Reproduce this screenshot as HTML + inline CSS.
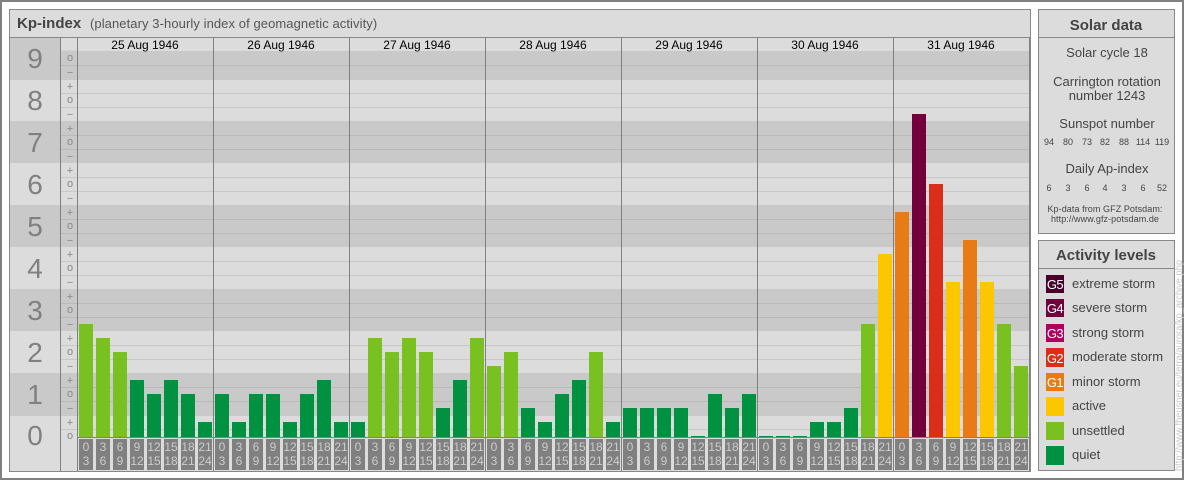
<!DOCTYPE html>
<html><head><meta charset="utf-8"><style>
html,body{margin:0;padding:0;background:#fff}
svg{display:block}
text{font-family:"Liberation Sans",Arial,sans-serif}
.d{font-size:28px;fill:#808080;text-anchor:middle}
.s{font-size:11px;fill:#888;text-anchor:middle}
.h{font-size:12px;fill:#000;text-anchor:middle}
.f{font-size:12px;fill:#ccc;text-anchor:middle}
.t{font-size:13px;fill:#444;text-anchor:middle}
.n{font-size:9px;fill:#444;text-anchor:middle}
.k{font-size:9px;fill:#444;text-anchor:middle;letter-spacing:.08px}
.l{font-size:13px;fill:#444}
.g{font-size:13px;fill:#fff;text-anchor:middle;letter-spacing:-.6px}
.b{font-size:15px;font-weight:bold;fill:#444;text-anchor:middle}
.q{fill:#009240}.u{fill:#79c120}.a{fill:#fdc700}.m{fill:#e77b16}.o{fill:#db2e1a}.v{fill:#72003a}
.c{fill:#808080}
</style></head><body>
<svg width="1184" height="480" viewBox="0 0 1184 480" xmlns="http://www.w3.org/2000/svg">
<rect x="1" y="1" width="1182" height="478" fill="#fff" stroke="#808080" stroke-width="2"/>
<!-- main panel -->
<rect x="9.5" y="9.5" width="1021" height="462" fill="#dcdcdc" stroke="#888"/>
<line x1="10" x2="1030" y1="37.5" y2="37.5" stroke="#888"/>
<text x="17" y="28" font-size="15" font-weight="bold" fill="#444">Kp-index</text>
<text x="90" y="28" font-size="13" fill="#555" letter-spacing=".08">(planetary 3-hourly index of geomagnetic activity)</text>
<!-- bands left -->
<rect x="10" y="38" width="50" height="42" fill="#c9c9c9"/>
<rect x="10" y="121" width="50" height="42" fill="#c9c9c9"/>
<rect x="10" y="205" width="50" height="42" fill="#c9c9c9"/>
<rect x="10" y="289" width="50" height="42" fill="#c9c9c9"/>
<rect x="10" y="373" width="50" height="43" fill="#c9c9c9"/>
<!-- bands chart -->
<rect x="61" y="51" width="969" height="29" fill="#c9c9c9"/>
<rect x="61" y="121" width="969" height="42" fill="#c9c9c9"/>
<rect x="61" y="205" width="969" height="42" fill="#c9c9c9"/>
<rect x="61" y="289" width="969" height="42" fill="#c9c9c9"/>
<rect x="61" y="373" width="969" height="43" fill="#c9c9c9"/>
<!-- grid lines -->
<g stroke="#b9b9b9">
<path d="M61 65.500H1030M61 149.500H1030M61 135.500H1030M61 233.500H1030M61 219.500H1030M61 317.500H1030M61 303.500H1030M61 401.500H1030M61 387.500H1030"/>
</g>
<g stroke="#c8c8c8">
<path d="M61 93.500H1030M61 107.500H1030M61 177.500H1030M61 191.500H1030M61 261.500H1030M61 275.500H1030M61 345.500H1030M61 359.500H1030M61 429.500H1030"/>
</g>
<!-- digits -->
<text class="d" x="35" y="68">9</text>
<text class="d" x="35" y="110">8</text>
<text class="d" x="35" y="152">7</text>
<text class="d" x="35" y="194">6</text>
<text class="d" x="35" y="236">5</text>
<text class="d" x="35" y="278">4</text>
<text class="d" x="35" y="320">3</text>
<text class="d" x="35" y="362">2</text>
<text class="d" x="35" y="404">1</text>
<text class="d" x="35" y="445">0</text>
<!-- signs -->
<text class="s" x="70" y="61">o</text><text class="s" x="70" y="76">−</text>
<text class="s" x="70" y="90">+</text><text class="s" x="70" y="103">o</text><text class="s" x="70" y="118">−</text>
<text class="s" x="70" y="132">+</text><text class="s" x="70" y="145">o</text><text class="s" x="70" y="160">−</text>
<text class="s" x="70" y="174">+</text><text class="s" x="70" y="187">o</text><text class="s" x="70" y="202">−</text>
<text class="s" x="70" y="216">+</text><text class="s" x="70" y="229">o</text><text class="s" x="70" y="244">−</text>
<text class="s" x="70" y="258">+</text><text class="s" x="70" y="271">o</text><text class="s" x="70" y="286">−</text>
<text class="s" x="70" y="300">+</text><text class="s" x="70" y="313">o</text><text class="s" x="70" y="328">−</text>
<text class="s" x="70" y="342">+</text><text class="s" x="70" y="355">o</text><text class="s" x="70" y="370">−</text>
<text class="s" x="70" y="384">+</text><text class="s" x="70" y="397">o</text><text class="s" x="70" y="412">−</text>
<text class="s" x="70" y="426">+</text><text class="s" x="70" y="439">o</text>
<!-- day labels -->
<text class="h" x="145" y="49">25 Aug 1946</text>
<text class="h" x="281" y="49">26 Aug 1946</text>
<text class="h" x="417" y="49">27 Aug 1946</text>
<text class="h" x="553" y="49">28 Aug 1946</text>
<text class="h" x="689" y="49">29 Aug 1946</text>
<text class="h" x="825" y="49">30 Aug 1946</text>
<text class="h" x="961" y="49">31 Aug 1946</text>
<!-- bars -->
<rect class="u" x="79" y="324" width="14" height="113"/><rect class="u" x="96" y="338" width="14" height="99"/><rect class="u" x="113" y="352" width="14" height="85"/><rect class="q" x="130" y="380" width="14" height="57"/><rect class="q" x="147" y="394" width="14" height="43"/><rect class="q" x="164" y="380" width="14" height="57"/><rect class="q" x="181" y="394" width="14" height="43"/><rect class="q" x="198" y="422" width="14" height="15"/>
<rect class="q" x="215" y="394" width="14" height="43"/><rect class="q" x="232" y="422" width="14" height="15"/><rect class="q" x="249" y="394" width="14" height="43"/><rect class="q" x="266" y="394" width="14" height="43"/><rect class="q" x="283" y="422" width="14" height="15"/><rect class="q" x="300" y="394" width="14" height="43"/><rect class="q" x="317" y="380" width="14" height="57"/><rect class="q" x="334" y="422" width="14" height="15"/>
<rect class="q" x="351" y="422" width="14" height="15"/><rect class="u" x="368" y="338" width="14" height="99"/><rect class="u" x="385" y="352" width="14" height="85"/><rect class="u" x="402" y="338" width="14" height="99"/><rect class="u" x="419" y="352" width="14" height="85"/><rect class="q" x="436" y="408" width="14" height="29"/><rect class="q" x="453" y="380" width="14" height="57"/><rect class="u" x="470" y="338" width="14" height="99"/>
<rect class="u" x="487" y="366" width="14" height="71"/><rect class="u" x="504" y="352" width="14" height="85"/><rect class="q" x="521" y="408" width="14" height="29"/><rect class="q" x="538" y="422" width="14" height="15"/><rect class="q" x="555" y="394" width="14" height="43"/><rect class="q" x="572" y="380" width="14" height="57"/><rect class="u" x="589" y="352" width="14" height="85"/><rect class="q" x="606" y="422" width="14" height="15"/>
<rect class="q" x="623" y="408" width="14" height="29"/><rect class="q" x="640" y="408" width="14" height="29"/><rect class="q" x="657" y="408" width="14" height="29"/><rect class="q" x="674" y="408" width="14" height="29"/><rect class="q" x="691" y="436" width="14" height="1"/><rect class="q" x="708" y="394" width="14" height="43"/><rect class="q" x="725" y="408" width="14" height="29"/><rect class="q" x="742" y="394" width="14" height="43"/>
<rect class="q" x="759" y="436" width="14" height="1"/><rect class="q" x="776" y="436" width="14" height="1"/><rect class="q" x="793" y="436" width="14" height="1"/><rect class="q" x="810" y="422" width="14" height="15"/><rect class="q" x="827" y="422" width="14" height="15"/><rect class="q" x="844" y="408" width="14" height="29"/><rect class="u" x="861" y="324" width="14" height="113"/><rect class="a" x="878" y="254" width="14" height="183"/>
<rect class="m" x="895" y="212" width="14" height="225"/><rect class="v" x="912" y="114" width="14" height="323"/><rect class="o" x="929" y="184" width="14" height="253"/><rect class="a" x="946" y="282" width="14" height="155"/><rect class="m" x="963" y="240" width="14" height="197"/><rect class="a" x="980" y="282" width="14" height="155"/><rect class="u" x="997" y="324" width="14" height="113"/><rect class="u" x="1014" y="366" width="14" height="71"/>
<!-- structure lines -->
<g stroke="#808080">
<path d="M60.500 38V471M77.500 38V471M213.500 38V471M349.500 38V471M485.500 38V471M621.500 38V471M757.500 38V471M893.500 38V471M1029.500 38V471"/>
<path d="M78 437.500H1030"/>
</g>
<line x1="61" x2="77" y1="51" y2="51" stroke="#c9c9c9"/>
<!-- footer cells -->
<g class="c">
<rect x="79" y="439" width="14" height="31"/><rect x="96" y="439" width="14" height="31"/><rect x="113" y="439" width="14" height="31"/><rect x="130" y="439" width="14" height="31"/><rect x="147" y="439" width="14" height="31"/><rect x="164" y="439" width="14" height="31"/><rect x="181" y="439" width="14" height="31"/><rect x="198" y="439" width="14" height="31"/>
<rect x="215" y="439" width="14" height="31"/><rect x="232" y="439" width="14" height="31"/><rect x="249" y="439" width="14" height="31"/><rect x="266" y="439" width="14" height="31"/><rect x="283" y="439" width="14" height="31"/><rect x="300" y="439" width="14" height="31"/><rect x="317" y="439" width="14" height="31"/><rect x="334" y="439" width="14" height="31"/>
<rect x="351" y="439" width="14" height="31"/><rect x="368" y="439" width="14" height="31"/><rect x="385" y="439" width="14" height="31"/><rect x="402" y="439" width="14" height="31"/><rect x="419" y="439" width="14" height="31"/><rect x="436" y="439" width="14" height="31"/><rect x="453" y="439" width="14" height="31"/><rect x="470" y="439" width="14" height="31"/>
<rect x="487" y="439" width="14" height="31"/><rect x="504" y="439" width="14" height="31"/><rect x="521" y="439" width="14" height="31"/><rect x="538" y="439" width="14" height="31"/><rect x="555" y="439" width="14" height="31"/><rect x="572" y="439" width="14" height="31"/><rect x="589" y="439" width="14" height="31"/><rect x="606" y="439" width="14" height="31"/>
<rect x="623" y="439" width="14" height="31"/><rect x="640" y="439" width="14" height="31"/><rect x="657" y="439" width="14" height="31"/><rect x="674" y="439" width="14" height="31"/><rect x="691" y="439" width="14" height="31"/><rect x="708" y="439" width="14" height="31"/><rect x="725" y="439" width="14" height="31"/><rect x="742" y="439" width="14" height="31"/>
<rect x="759" y="439" width="14" height="31"/><rect x="776" y="439" width="14" height="31"/><rect x="793" y="439" width="14" height="31"/><rect x="810" y="439" width="14" height="31"/><rect x="827" y="439" width="14" height="31"/><rect x="844" y="439" width="14" height="31"/><rect x="861" y="439" width="14" height="31"/><rect x="878" y="439" width="14" height="31"/>
<rect x="895" y="439" width="14" height="31"/><rect x="912" y="439" width="14" height="31"/><rect x="929" y="439" width="14" height="31"/><rect x="946" y="439" width="14" height="31"/><rect x="963" y="439" width="14" height="31"/><rect x="980" y="439" width="14" height="31"/><rect x="997" y="439" width="14" height="31"/><rect x="1014" y="439" width="14" height="31"/>
</g>
<!-- footer labels -->
<g class="f">
<text class="f" x="86" y="451">0</text><text class="f" x="86" y="465">3</text><text class="f" x="103" y="451">3</text><text class="f" x="103" y="465">6</text><text class="f" x="120" y="451">6</text><text class="f" x="120" y="465">9</text><text class="f" x="137" y="451">9</text><text class="f" x="137" y="465">12</text><text class="f" x="154" y="451">12</text><text class="f" x="154" y="465">15</text><text class="f" x="171" y="451">15</text><text class="f" x="171" y="465">18</text><text class="f" x="188" y="451">18</text><text class="f" x="188" y="465">21</text><text class="f" x="205" y="451">21</text><text class="f" x="205" y="465">24</text>
<text class="f" x="222" y="451">0</text><text class="f" x="222" y="465">3</text><text class="f" x="239" y="451">3</text><text class="f" x="239" y="465">6</text><text class="f" x="256" y="451">6</text><text class="f" x="256" y="465">9</text><text class="f" x="273" y="451">9</text><text class="f" x="273" y="465">12</text><text class="f" x="290" y="451">12</text><text class="f" x="290" y="465">15</text><text class="f" x="307" y="451">15</text><text class="f" x="307" y="465">18</text><text class="f" x="324" y="451">18</text><text class="f" x="324" y="465">21</text><text class="f" x="341" y="451">21</text><text class="f" x="341" y="465">24</text>
<text class="f" x="358" y="451">0</text><text class="f" x="358" y="465">3</text><text class="f" x="375" y="451">3</text><text class="f" x="375" y="465">6</text><text class="f" x="392" y="451">6</text><text class="f" x="392" y="465">9</text><text class="f" x="409" y="451">9</text><text class="f" x="409" y="465">12</text><text class="f" x="426" y="451">12</text><text class="f" x="426" y="465">15</text><text class="f" x="443" y="451">15</text><text class="f" x="443" y="465">18</text><text class="f" x="460" y="451">18</text><text class="f" x="460" y="465">21</text><text class="f" x="477" y="451">21</text><text class="f" x="477" y="465">24</text>
<text class="f" x="494" y="451">0</text><text class="f" x="494" y="465">3</text><text class="f" x="511" y="451">3</text><text class="f" x="511" y="465">6</text><text class="f" x="528" y="451">6</text><text class="f" x="528" y="465">9</text><text class="f" x="545" y="451">9</text><text class="f" x="545" y="465">12</text><text class="f" x="562" y="451">12</text><text class="f" x="562" y="465">15</text><text class="f" x="579" y="451">15</text><text class="f" x="579" y="465">18</text><text class="f" x="596" y="451">18</text><text class="f" x="596" y="465">21</text><text class="f" x="613" y="451">21</text><text class="f" x="613" y="465">24</text>
<text class="f" x="630" y="451">0</text><text class="f" x="630" y="465">3</text><text class="f" x="647" y="451">3</text><text class="f" x="647" y="465">6</text><text class="f" x="664" y="451">6</text><text class="f" x="664" y="465">9</text><text class="f" x="681" y="451">9</text><text class="f" x="681" y="465">12</text><text class="f" x="698" y="451">12</text><text class="f" x="698" y="465">15</text><text class="f" x="715" y="451">15</text><text class="f" x="715" y="465">18</text><text class="f" x="732" y="451">18</text><text class="f" x="732" y="465">21</text><text class="f" x="749" y="451">21</text><text class="f" x="749" y="465">24</text>
<text class="f" x="766" y="451">0</text><text class="f" x="766" y="465">3</text><text class="f" x="783" y="451">3</text><text class="f" x="783" y="465">6</text><text class="f" x="800" y="451">6</text><text class="f" x="800" y="465">9</text><text class="f" x="817" y="451">9</text><text class="f" x="817" y="465">12</text><text class="f" x="834" y="451">12</text><text class="f" x="834" y="465">15</text><text class="f" x="851" y="451">15</text><text class="f" x="851" y="465">18</text><text class="f" x="868" y="451">18</text><text class="f" x="868" y="465">21</text><text class="f" x="885" y="451">21</text><text class="f" x="885" y="465">24</text>
<text class="f" x="902" y="451">0</text><text class="f" x="902" y="465">3</text><text class="f" x="919" y="451">3</text><text class="f" x="919" y="465">6</text><text class="f" x="936" y="451">6</text><text class="f" x="936" y="465">9</text><text class="f" x="953" y="451">9</text><text class="f" x="953" y="465">12</text><text class="f" x="970" y="451">12</text><text class="f" x="970" y="465">15</text><text class="f" x="987" y="451">15</text><text class="f" x="987" y="465">18</text><text class="f" x="1004" y="451">18</text><text class="f" x="1004" y="465">21</text><text class="f" x="1021" y="451">21</text><text class="f" x="1021" y="465">24</text>
</g>
<!-- solar panel -->
<rect x="1038.500" y="9.500" width="136" height="224" fill="#dcdcdc" stroke="#888"/>
<line x1="1039" x2="1174" y1="37.500" y2="37.500" stroke="#888"/>
<text class="b" x="1106" y="30">Solar data</text>
<text class="t" x="1107" y="57">Solar cycle 18</text>
<text class="t" x="1107" y="86">Carrington rotation</text>
<text class="t" x="1107" y="100">number 1243</text>
<text class="t" x="1107" y="128">Sunspot number</text>
<text class="n" x="1049" y="145">94</text><text class="n" x="1068" y="145">80</text><text class="n" x="1087" y="145">73</text><text class="n" x="1105" y="145">82</text><text class="n" x="1124" y="145">88</text><text class="n" x="1143" y="145">114</text><text class="n" x="1162" y="145">119</text>
<text class="t" x="1107" y="173">Daily Ap-index</text>
<text class="n" x="1049" y="191">6</text><text class="n" x="1068" y="191">3</text><text class="n" x="1087" y="191">6</text><text class="n" x="1105" y="191">4</text><text class="n" x="1124" y="191">3</text><text class="n" x="1143" y="191">6</text><text class="n" x="1162" y="191">52</text>
<text class="k" x="1105" y="212">Kp-data from GFZ Potsdam:</text>
<text class="k" x="1105" y="222">http://www.gfz-potsdam.de</text>
<!-- activity panel -->
<rect x="1038.500" y="240.500" width="136" height="230" fill="#dcdcdc" stroke="#888"/>
<line x1="1039" x2="1174" y1="268.500" y2="268.500" stroke="#888"/>
<text class="b" x="1106" y="260">Activity levels</text>
<rect x="1046" y="275" width="18" height="18" fill="#48002b"/>
<rect x="1046" y="299" width="18" height="18" fill="#72003a"/>
<rect x="1046" y="324" width="18" height="18" fill="#b0005f"/>
<rect x="1046" y="348" width="18" height="19" fill="#db2e1a"/>
<rect x="1046" y="373" width="18" height="18" fill="#e77b16"/>
<rect x="1046" y="397" width="18" height="19" fill="#fdc700"/>
<rect x="1046" y="422" width="18" height="18" fill="#79c120"/>
<rect x="1046" y="446" width="18" height="19" fill="#009240"/>
<text class="g" x="1055" y="289">G5</text>
<text class="g" x="1055" y="313">G4</text>
<text class="g" x="1055" y="338">G3</text>
<text class="g" x="1055" y="363">G2</text>
<text class="g" x="1055" y="387">G1</text>
<text class="l" x="1072" y="288">extreme storm</text>
<text class="l" x="1072" y="312">severe storm</text>
<text class="l" x="1072" y="337">strong storm</text>
<text class="l" x="1072" y="361">moderate storm</text>
<text class="l" x="1072" y="386">minor storm</text>
<text class="l" x="1072" y="410">active</text>
<text class="l" x="1072" y="435">unsettled</text>
<text class="l" x="1072" y="459">quiet</text>
<!-- vertical url -->
<text x="0" y="0" font-size="10" fill="#c8c8c8" textLength="211" lengthAdjust="spacingAndGlyphs" transform="translate(1182 471) rotate(-90)">http://www.fheusner.eu/terra/aurora/kp_archive.php</text>
</svg>
</body></html>
